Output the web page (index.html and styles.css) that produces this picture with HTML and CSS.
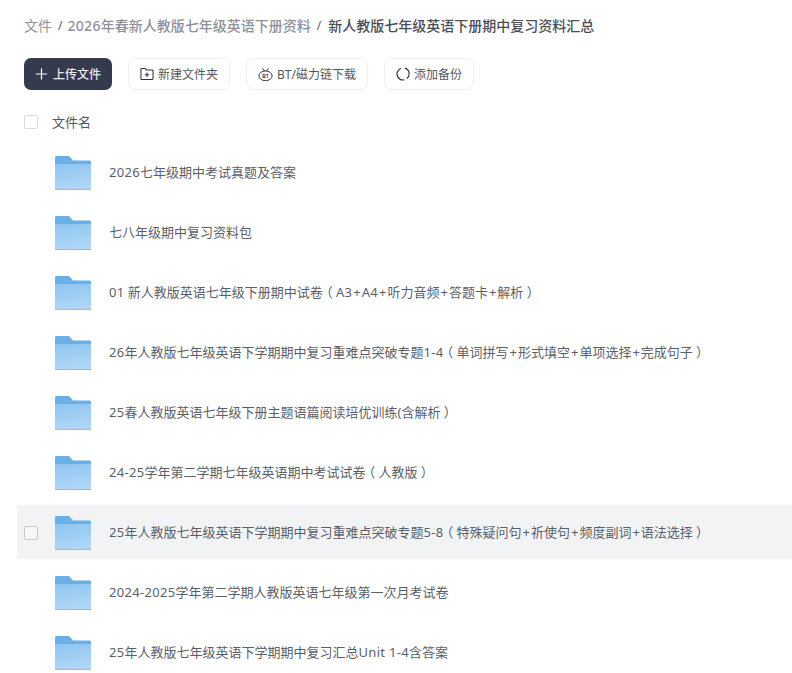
FILE: index.html
```html
<!DOCTYPE html>
<html lang="zh-CN">
<head>
    <meta charset="UTF-8">
    <title>文件</title>
    <link rel="stylesheet" href="styles.css">
</head>
<body>
<svg class="defs" width="0" height="0">
    <defs>
        <linearGradient id="folder-body" x1="0" y1="0" x2="0.2" y2="1">
            <stop offset="0" stop-color="#90c5f0"/>
            <stop offset="1" stop-color="#aed7f7"/>
        </linearGradient>
        <symbol id="folder" viewBox="0 0 36 34">
            <path d="M1.5 0H14l4 4.5H34.5Q36 4.5 36 6V33Q36 34 34.5 34H1.5Q0 34 0 32.5V1.5Q0 0 1.5 0Z" fill="#6aafe5"/>
            <path d="M0 8H36V32.5Q36 34 34.5 34H1.5Q0 34 0 32.5Z" fill="url(#folder-body)"/>
            <path d="M28 13H33" stroke="#a3cdee" stroke-width="1"/>
            <path d="M0 33.5H36" stroke="#8abde8" stroke-width="1"/>
        </symbol>
    </defs>
</svg>
<div class="page">
    <div class="crumbs">
        <span class="crumb">文件</span>
        <span class="sep">/</span>
        <span class="crumb"><span class="lat">2026</span>年春新人教版七年级英语下册资料</span>
        <span class="sep">/</span>
        <span class="crumb current">新人教版七年级英语下册期中复习资料汇总</span>
    </div>

    <div class="toolbar">
        <button class="btn primary">
            <svg width="14" height="14" viewBox="0 0 14 14"><path d="M7 1V13M1 7H13" stroke="#fff" stroke-width="1.3" fill="none"/></svg>
            上传文件
        </button>
        <button class="btn">
            <svg width="14" height="14" viewBox="0 0 15 14" fill="none" stroke="#2b2f3a" stroke-width="1.1"><path d="M1 2.2Q1 1 2.2 1H5.5L7 2.8H13Q14 2.8 14 3.8V11.8Q14 13 12.8 13H2.2Q1 13 1 11.8Z"/><path d="M7.5 5.5V10.3M5.1 7.9H9.9"/></svg>
            新建文件夹
        </button>
        <button class="btn">
            <svg width="15" height="15" viewBox="0 0 17 16" fill="none" stroke="#2b2f3a" stroke-width="1.1"><ellipse cx="8.5" cy="9.5" rx="7.5" ry="5.5"/><path d="M5 1L7.5 4M12 1L9.5 4"/><text x="8.5" y="11.6" font-size="5.5" font-weight="700" font-family="Liberation Sans" text-anchor="middle" fill="#2b2f3a" stroke="none">BT</text></svg>
            BT/磁力链下载
        </button>
        <button class="btn">
            <svg width="14" height="14" viewBox="0 0 15 15" fill="none" stroke="#2b2f3a" stroke-width="1.2"><path d="M9.5 1.2A6.4 6.4 0 0 1 11.5 12.5"/><path d="M9 13.7A6.4 6.4 0 0 1 3 3L5.2 1.4"/></svg>
            添加备份
        </button>
    </div>

    <div class="list-head">
        <span class="check"></span>
        <span class="name">文件名</span>
    </div>

    <div class="list">
        <div class="row">
            <svg class="folder"><use href="#folder"/></svg>
            <span class="name"><span class="lat">2026</span>七年级期中考试真题及答案</span>
        </div>
        <div class="row">
            <svg class="folder"><use href="#folder"/></svg>
            <span class="name">七八年级期中复习资料包</span>
        </div>
        <div class="row">
            <svg class="folder"><use href="#folder"/></svg>
            <span class="name"><span class="lat">01</span> 新人教版英语七年级下册期中试卷<span class="paren">（</span><span class="lat">A3</span><span class="plus">+</span><span class="lat">A4</span><span class="plus">+</span>听力音频<span class="plus">+</span>答题卡<span class="plus">+</span>解析<span class="paren">）</span></span>
        </div>
        <div class="row">
            <svg class="folder"><use href="#folder"/></svg>
            <span class="name"><span class="lat">26</span>年人教版七年级英语下学期期中复习重难点突破专题<span class="lat">1-4</span><span class="paren">（</span>单词拼写<span class="plus">+</span>形式填空<span class="plus">+</span>单项选择<span class="plus">+</span>完成句子<span class="paren">）</span></span>
        </div>
        <div class="row">
            <svg class="folder"><use href="#folder"/></svg>
            <span class="name"><span class="lat">25</span>春人教版英语七年级下册主题语篇阅读培优训练(含解析<span class="paren">）</span></span>
        </div>
        <div class="row">
            <svg class="folder"><use href="#folder"/></svg>
            <span class="name"><span class="lat">24-25</span>学年第二学期七年级英语期中考试试卷<span class="paren">（</span>人教版<span class="paren">）</span></span>
        </div>
        <div class="row hover">
            <span class="check"></span>
            <svg class="folder"><use href="#folder"/></svg>
            <span class="name"><span class="lat">25</span>年人教版七年级英语下学期期中复习重难点突破专题<span class="lat">5-8</span><span class="paren">（</span>特殊疑问句<span class="plus">+</span>祈使句<span class="plus">+</span>频度副词<span class="plus">+</span>语法选择<span class="paren">）</span></span>
        </div>
        <div class="row">
            <svg class="folder"><use href="#folder"/></svg>
            <span class="name"><span class="lat">2024-2025</span>学年第二学期人教版英语七年级第一次月考试卷</span>
        </div>
        <div class="row">
            <svg class="folder"><use href="#folder"/></svg>
            <span class="name"><span class="lat">25</span>年人教版七年级英语下学期期中复习汇总<span class="lat">Unit 1-4</span>含答案</span>
        </div>
    </div>
</div>
</body>
</html>
```

FILE: styles.css
```css
* {
    box-sizing: border-box;
    -webkit-font-smoothing: antialiased;
}

html, body {
    margin: 0;
    height: 100%;
    overflow: hidden;
    background: #fff;
}

body {
    font-family: "Noto Sans", "Noto Sans CJK SC", "Liberation Sans", sans-serif;
    color: #4a4d57;
}

.defs {
    position: absolute;
}

.page {
    padding: 15px 0 0 17px;
}

.crumbs {
    display: flex;
    align-items: center;
    height: 20px;
    margin-left: 7px;
    font-size: 14px;
    font-weight: 500;
    color: #8f9199;
}

.crumb:first-child {
    font-weight: 400;
}

.sep {
    margin: 0 5px 0 6px;
    font-size: 12px;
    font-weight: 400;
    color: #55585f;
}

.current {
    margin-left: 2px;
    color: #4b4e57;
}

.toolbar {
    display: flex;
    gap: 16px;
    margin: 23px 0 0 7px;
}

.btn {
    display: flex;
    align-items: center;
    gap: 4px;
    height: 32px;
    padding: 0 11px;
    border: 1px solid #eff0f2;
    border-radius: 7px;
    background: #fff;
    font: inherit;
    font-size: 12px;
    color: #55585f;
    white-space: nowrap;
}

.btn.primary {
    gap: 5px;
    width: 88px;
    border: 0;
    background: #353a4e;
    color: #e8e9ee;
    font-weight: 500;
}

.list-head {
    display: flex;
    align-items: center;
    gap: 14px;
    height: 20px;
    margin: 22px 0 0 7px;
    font-size: 13px;
    color: #55585f;
}

.check {
    flex: none;
    width: 14px;
    height: 14px;
    border: 1px solid #d9dade;
    border-radius: 2px;
    background: #fff;
}

.list {
    display: flex;
    flex-direction: column;
    gap: 6px;
    margin-top: 13px;
}

.row {
    display: flex;
    align-items: center;
    height: 54px;
    padding-left: 38px;
    font-size: 13px;
    color: #5c5f68;
}

.row.hover {
    padding-left: 7px;
    background: #f2f3f5;
}

.row.hover .check {
    margin: 2px 17px 0 0;
    border-color: #c9cacf;
    background: #f7f7f8;
}

.folder {
    flex: none;
    width: 36px;
    height: 34px;
    margin: 2px 18px 0 0;
}

.name {
    margin-bottom: 2px;
    white-space: nowrap;
}

/* latin runs are a little wider than the font gives */
.lat {
    letter-spacing: 0.3px;
}

.plus {
    margin: 0 1px;
}

/* full-width brackets sit in the middle of their cell */
.paren {
    padding: 0 3.25px;
    font-feature-settings: "halt";
}
```
